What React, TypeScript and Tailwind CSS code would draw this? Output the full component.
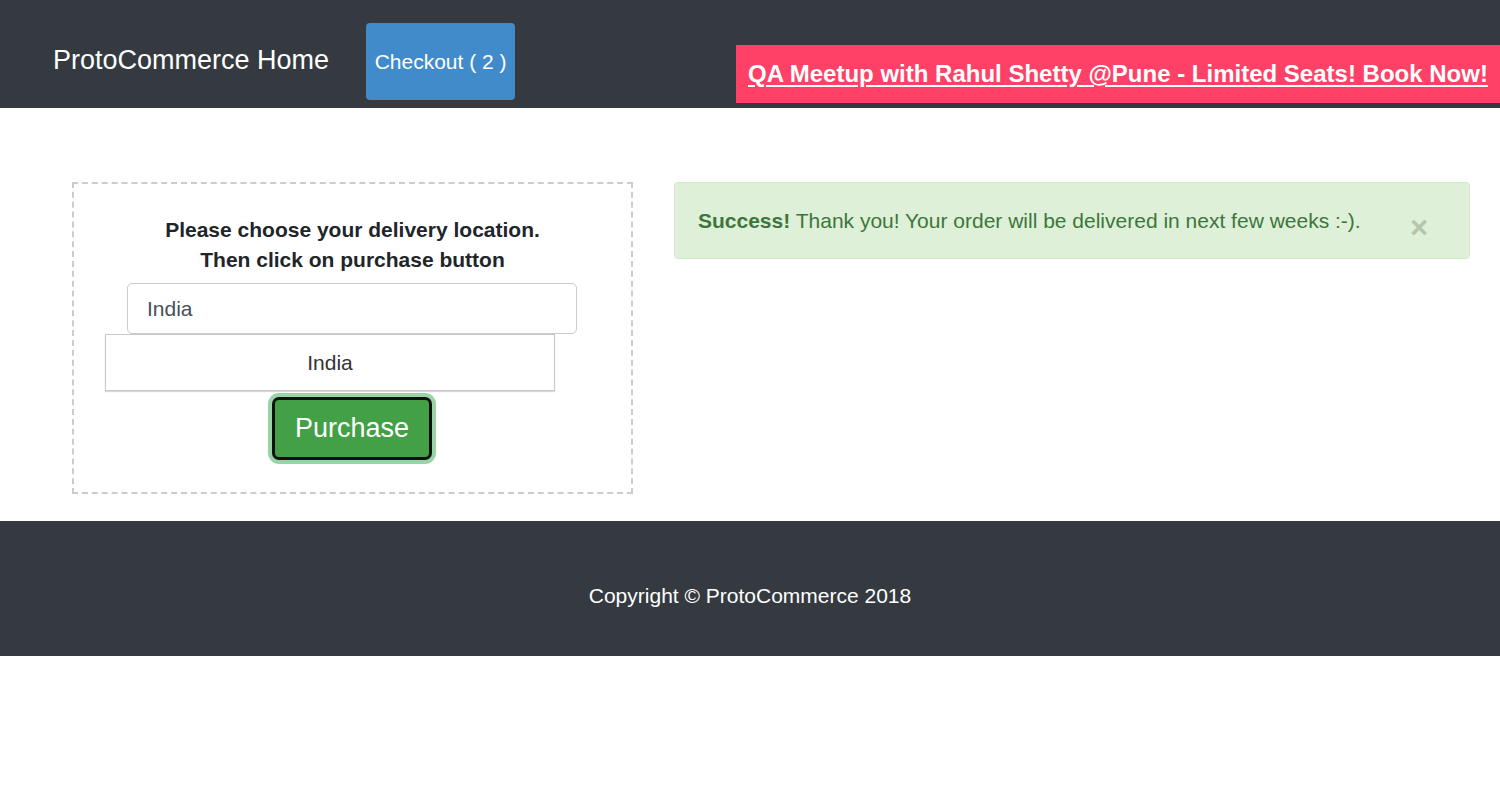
import React, { useState } from 'react';

const font = { fontFamily: '"Liberation Sans", Arial, Helvetica, sans-serif' };

export default function App() {
  const [country, setCountry] = useState('India');
  const [showAlert, setShowAlert] = useState(true);

  return (
    <div className="min-h-[800px] bg-white text-[21px] text-[#333]" style={font}>
      {/* Navbar */}
      <header className="flex h-[108px] bg-[#343a40]">
        <a href="#" className="mt-[47px] self-start pl-[53px] text-[27px] leading-none text-white">
          ProtoCommerce Home
        </a>
        <button className="ml-[37px] mt-[23px] flex h-[77px] w-[149px] items-center justify-center self-start rounded-[4px] bg-[#428bca] text-[21px] leading-none text-white">
          Checkout ( 2 )
        </button>
        <div className="mb-[5px] ml-auto flex h-[58px] w-[764px] items-center self-end bg-[#ff4167] pl-[12px]">
          <a href="#" className="text-[24px] font-bold leading-none text-white underline underline-offset-[3px]">
            QA Meetup with Rahul Shetty @Pune - Limited Seats! Book Now!
          </a>
        </div>
      </header>

      {/* Checkout body */}
      <main className="flex h-[413px] items-start gap-[41px] pl-[72px] pr-[30px] pt-[74px]">
        <div className="flex w-[561px] shrink-0 flex-col border-2 border-dashed border-[#cccccc] pb-[32px] pt-[31px]">
          <label className="text-center font-bold leading-[30px] text-[#212529]">
            Please choose your delivery location.
            <br />
            Then click on purchase button
          </label>
          <input
            value={country}
            onChange={(e) => setCountry(e.target.value)}
            className="ml-[53px] mt-[8px] h-[51px] w-[450px] rounded-[5px] border border-[#cccccc] px-[19px] text-[21px] text-[#495057] outline-none"
          />
          <ul className="ml-[31px] w-[450px] border border-[#c8c8c8] bg-white shadow-[0_1px_1px_rgba(0,0,0,0.15)]">
            <li className="flex h-[55px] items-center justify-center text-[#333]">India</li>
          </ul>
          <button
            onClick={() => setShowAlert(true)}
            className="ml-[198px] mt-[6px] flex h-[63px] w-[160px] items-center justify-center rounded-[7px] border-[3px] border-[#111] bg-[#43a047] pb-[1px] text-[27px] leading-none text-white shadow-[0_0_0_4px_#98d4a6]"
          >
            Purchase
          </button>
        </div>

        {showAlert && (
          <div className="flex h-[77px] flex-1 items-center justify-between rounded-[4px] border border-[#d6e9c6] bg-[#dff0d8] pl-[23px] pr-[41px] text-[#3c763d]">
            <p className="leading-[30px]">
              <strong>Success!</strong> Thank you! Your order will be delivered in next few weeks :-).
            </p>
            <button
              onClick={() => setShowAlert(false)}
              className="mt-[14px] text-[31px] font-bold leading-none text-[#b3c7ad]"
            >
              ×
            </button>
          </div>
        )}
      </main>

      {/* Footer */}
      <footer className="bg-[#343a40] pb-[45px] pt-[60px] text-center">
        <p className="leading-[30px] text-white">Copyright © ProtoCommerce 2018</p>
      </footer>
    </div>
  );
}
